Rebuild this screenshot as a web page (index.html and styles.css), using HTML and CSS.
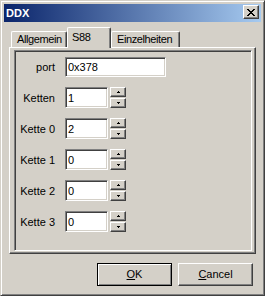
FILE: index.html
```html
<!DOCTYPE html>
<html>

<head>
    <title>DDX</title>
    <meta charset="UTF-8">
    <link rel="stylesheet" href="styles.css">
</head>

<body>
    <div class="window">
        <div class="titlebar">
            <span class="title">DDX</span>
            <button class="close-btn" title="Close">
                <svg width="8" height="7" viewBox="0 0 8 7" shape-rendering="crispEdges">
                    <path d="M0 0h2v1H0z M6 0h2v1H6z M1 1h2v1H1z M5 1h2v1H5z M2 2h4v1H2z M3 3h2v1H3z M2 4h4v1H2z M1 5h2v1H1z M5 5h2v1H5z M0 6h2v1H0z M6 6h2v1H6z" fill="#000" />
                </svg>
            </button>
        </div>

        <div class="dialog-body">
            <div class="tabs">
                <div class="tab tab-allgemein">Allgemein</div>
                <div class="tab tab-s88 active">S88</div>
                <div class="tab tab-details">Einzelheiten</div>
            </div>

            <div class="tab-panel">
                <div class="frame">
                    <div class="form">
                        <label for="port">port</label>
                        <input id="port" class="field field-wide" type="text" value="0x378">

                        <label for="ketten">Ketten</label>
                        <div class="spin-row">
                            <input id="ketten" class="field field-num" type="text" value="1">
                            <div class="spinner">
                                <div class="spin-btn"><svg width="3" height="2" viewBox="0 0 3 2" shape-rendering="crispEdges"><path d="M1 0h1v1h1v1H0V1h1z" /></svg></div>
                                <div class="spin-btn"><svg width="3" height="2" viewBox="0 0 3 2" shape-rendering="crispEdges"><path d="M0 0h3v1H2v1H1V1H0z" /></svg></div>
                            </div>
                        </div>

                        <label for="kette0">Kette 0</label>
                        <div class="spin-row">
                            <input id="kette0" class="field field-num" type="text" value="2">
                            <div class="spinner">
                                <div class="spin-btn"><svg width="3" height="2" viewBox="0 0 3 2" shape-rendering="crispEdges"><path d="M1 0h1v1h1v1H0V1h1z" /></svg></div>
                                <div class="spin-btn"><svg width="3" height="2" viewBox="0 0 3 2" shape-rendering="crispEdges"><path d="M0 0h3v1H2v1H1V1H0z" /></svg></div>
                            </div>
                        </div>

                        <label for="kette1">Kette 1</label>
                        <div class="spin-row">
                            <input id="kette1" class="field field-num" type="text" value="0">
                            <div class="spinner">
                                <div class="spin-btn"><svg width="3" height="2" viewBox="0 0 3 2" shape-rendering="crispEdges"><path d="M1 0h1v1h1v1H0V1h1z" /></svg></div>
                                <div class="spin-btn"><svg width="3" height="2" viewBox="0 0 3 2" shape-rendering="crispEdges"><path d="M0 0h3v1H2v1H1V1H0z" /></svg></div>
                            </div>
                        </div>

                        <label for="kette2">Kette 2</label>
                        <div class="spin-row">
                            <input id="kette2" class="field field-num" type="text" value="0">
                            <div class="spinner">
                                <div class="spin-btn"><svg width="3" height="2" viewBox="0 0 3 2" shape-rendering="crispEdges"><path d="M1 0h1v1h1v1H0V1h1z" /></svg></div>
                                <div class="spin-btn"><svg width="3" height="2" viewBox="0 0 3 2" shape-rendering="crispEdges"><path d="M0 0h3v1H2v1H1V1H0z" /></svg></div>
                            </div>
                        </div>

                        <label for="kette3">Kette 3</label>
                        <div class="spin-row">
                            <input id="kette3" class="field field-num" type="text" value="0">
                            <div class="spinner">
                                <div class="spin-btn"><svg width="3" height="2" viewBox="0 0 3 2" shape-rendering="crispEdges"><path d="M1 0h1v1h1v1H0V1h1z" /></svg></div>
                                <div class="spin-btn"><svg width="3" height="2" viewBox="0 0 3 2" shape-rendering="crispEdges"><path d="M0 0h3v1H2v1H1V1H0z" /></svg></div>
                            </div>
                        </div>
                    </div>
                </div>
            </div>

            <div class="buttons">
                <button class="btn default"><u>O</u>K</button>
                <button class="btn"><u>C</u>ancel</button>
            </div>
        </div>
    </div>
</body>

</html>
```

FILE: styles.css
```css
body {
    margin: 0;
    font-family: 'Liberation Sans', Arial, sans-serif;
    font-size: 11px;
    line-height: 13px;
    color: #000;
    background-color: #d4d0c8;
}

/* Outer window frame */

.window {
    box-sizing: border-box;
    width: 265px;
    height: 296px;
    padding: 3px;
    display: flex;
    flex-direction: column;
    background-color: #d4d0c8;
    border: 1px solid;
    border-color: #d4d0c8 #404040 #404040 #d4d0c8;
    box-shadow: inset 1px 1px #fff, inset -1px -1px #808080;
}

.titlebar {
    height: 18px;
    display: flex;
    justify-content: space-between;
    align-items: center;
    padding-left: 2px;
    background: linear-gradient(to right, #0a246a, #a6caf0);
}

.title {
    color: #fff;
    font-weight: bold;
}

.close-btn {
    align-self: flex-start;
    box-sizing: border-box;
    width: 16px;
    height: 14px;
    margin: 1px 2px 0 0;
    padding: 1px 0 0 0;
    display: flex;
    justify-content: center;
    align-items: center;
    border: 1px solid;
    border-color: #fff #404040 #404040 #fff;
    box-shadow: inset -1px -1px #808080;
    background-color: #d4d0c8;
}

.close-btn svg {
    display: block;
}

/* Dialog body */

.dialog-body {
    flex: 1;
    display: flex;
    flex-direction: column;
    padding: 5px 5px 6px 5px;
}

.tabs {
    height: 21px;
    margin-bottom: -1px;
    padding-left: 2px;
    display: flex;
    align-items: flex-end;
    position: relative;
    z-index: 1;
}

.tab {
    box-sizing: border-box;
    height: 16px;
    margin-bottom: 1px;
    padding: 1px 0 0 5px;
    white-space: nowrap;
    letter-spacing: -0.4px;
    background-color: #d4d0c8;
    border: 1px solid;
    border-color: #fff #404040 transparent #fff;
    border-bottom: none;
    border-radius: 2px 2px 0 0;
    box-shadow: inset -1px 0 #808080;
}

.tab-allgemein {
    width: 56px;
}

.tab-s88 {
    width: 44px;
}

.tab-details {
    width: 69px;
}

.tab.active {
    height: 21px;
    margin-bottom: 0;
    padding: 3px 0 0 4px;
}

.tab-panel {
    flex: 1;
    display: flex;
    padding: 2px 3px 2px 4px;
    border: 1px solid;
    border-color: #fff #404040 #404040 #fff;
    box-shadow: inset -1px -1px #808080;
}

.frame {
    flex: 1;
    border: 1px solid;
    border-color: #808080 #fff #fff #808080;
    box-shadow: inset 1px 1px #404040, inset -1px -1px #d4d0c8;
    padding: 6px 0 0 1px;
}

/* Form rows */

.form {
    display: grid;
    grid-template-columns: 39px auto;
    column-gap: 10px;
    row-gap: 10px;
    align-items: center;
    justify-items: start;
}

.form label {
    justify-self: end;
    padding-top: 1px;
}

.field {
    box-sizing: border-box;
    margin: 0;
    padding: 0 0 0 2px;
    font: inherit;
    color: #000;
    background-color: #fff;
    border: 1px solid;
    border-color: #808080 #fff #fff #808080;
    box-shadow: inset 1px 1px #404040, inset -1px -1px #d4d0c8;
    outline: none;
}

.field-wide {
    width: 101px;
    height: 20px;
}

.field-num {
    width: 43px;
    height: 21px;
}

.spin-row {
    display: flex;
    align-items: center;
}

.spinner {
    margin-left: 2px;
    display: flex;
    flex-direction: column;
    gap: 1px;
}

.spin-btn {
    box-sizing: border-box;
    width: 16px;
    height: 10px;
    display: flex;
    justify-content: center;
    align-items: center;
    border: 1px solid;
    border-color: #fff #404040 #404040 #fff;
    box-shadow: inset -1px -1px #808080;
}

.spin-btn svg {
    display: block;
    fill: #000;
}

/* Bottom buttons */

.buttons {
    margin-top: 9px;
    padding-right: 3px;
    display: flex;
    justify-content: flex-end;
    gap: 6px;
}

.btn {
    box-sizing: border-box;
    width: 75px;
    height: 23px;
    margin: 0;
    padding: 0;
    font: inherit;
    color: #000;
    background-color: #d4d0c8;
    border: 1px solid;
    border-color: #fff #404040 #404040 #fff;
    box-shadow: inset -1px -1px #808080;
}

.btn.default {
    border-color: #000;
    box-shadow: inset 1px 1px #fff, inset -1px -1px #808080;
}
```
